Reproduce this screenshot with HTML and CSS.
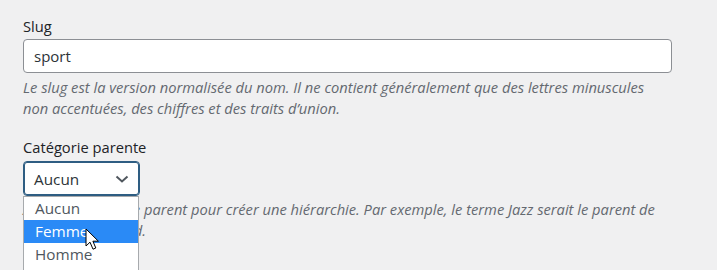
FILE: index.html
```html
<!DOCTYPE html>
<html lang="fr">
<head>
    <meta charset="UTF-8">
    <title>Modifier la catégorie</title>
    <link rel="stylesheet" href="styles.css">
</head>
<body>
    <div class="form-field">
        <label class="field-label" for="slug">Slug</label>
        <input class="text-input" type="text" id="slug" value="sport">
        <p class="description">Le slug est la version normalisée du nom. Il ne contient généralement que des lettres minuscules non accentuées, des chiffres et des traits d’union.</p>
    </div>

    <div class="form-field parent-field">
        <label class="field-label">Catégorie parente</label>
        <div class="select-wrap">
            <div class="select-box">
                <span>Aucun</span>
                <svg class="chevron" width="14" height="8" viewBox="0 0 14 8">
                    <path d="M1.5 1.5 L7 6.5 L12.5 1.5" fill="none" stroke="#50575e" stroke-width="2"/>
                </svg>
            </div>
            <ul class="dropdown">
                <li>Aucun</li>
                <li class="active">Femme</li>
                <li>Homme</li>
            </ul>
            <svg class="cursor" width="15" height="23" viewBox="0 0 15 23">
                <path d="M1 1 L1 18 L5 14.2 L8 21.2 L10.8 20 L7.9 13.2 L13.4 13.2 Z" fill="#fff" stroke="#000" stroke-width="1" stroke-linejoin="round"/>
            </svg>
        </div>
        <p class="description">Assignez un terme parent pour créer une hiérarchie. Par exemple, le terme Jazz serait le parent de Bebop et Big Band.</p>
    </div>
</body>
</html>
```

FILE: styles.css
```css
* {
    margin: 0;
    padding: 0;
    box-sizing: border-box;
}

body {
    background: #f0f0f1;
    color: #1d2327;
    font-family: "Open Sans", "Noto Sans", sans-serif;
    font-size: 14.7px;
    min-height: 100vh;
    padding: 16px 0 0 23px;
}

.form-field {
    width: 649px;
}

.field-label {
    display: block;
    font-size: 14.7px;
    line-height: 20px;
    margin-bottom: 3px;
}

.text-input {
    display: block;
    width: 100%;
    height: 34px;
    padding: 0 10px;
    border: 1px solid #8c8f94;
    border-radius: 4px;
    background: #fff;
    font-family: inherit;
    font-size: 15px;
    color: #2c3338;
}

.description {
    margin-top: 4px;
    color: #646970;
    font-style: italic;
    font-size: 14.7px;
    line-height: 21px;
}

.parent-field {
    margin-top: 18px;
}

.parent-field .field-label {
    margin-bottom: 4px;
}

.parent-field .description {
    margin-top: 3px;
}

.select-wrap {
    position: relative;
    width: 117px;
}

.select-box {
    display: flex;
    align-items: center;
    justify-content: space-between;
    height: 35px;
    padding: 0 10px;
    border: 1px solid #2e5d82;
    box-shadow: 0 0 0 1px #2e5d82 inset;
    border-radius: 4px;
    background: #fff;
    font-size: 15.3px;
    color: #2c3338;
}

.chevron {
    margin-top: 1px;
}

.dropdown {
    position: absolute;
    top: 35px;
    left: 0;
    width: 116px;
    height: 90px;
    list-style: none;
    background: #fff;
    border: 1px solid #a7aaad;
    border-bottom: none;
    font-size: 15.3px;
    color: #50575e;
    z-index: 5;
}

.dropdown li {
    height: 23px;
    line-height: 23px;
    padding-left: 11px;
}

.dropdown li.active {
    background: #2a8af6;
    color: #fff;
}

.cursor {
    position: absolute;
    top: 67px;
    left: 62px;
    z-index: 6;
}
```
